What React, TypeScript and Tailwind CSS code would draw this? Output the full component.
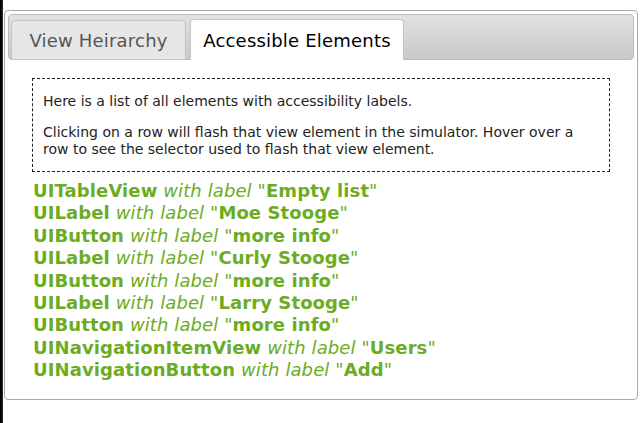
const items: [string, string][] = [
  ["UITableView", "Empty list"],
  ["UILabel", "Moe Stooge"],
  ["UIButton", "more info"],
  ["UILabel", "Curly Stooge"],
  ["UIButton", "more info"],
  ["UILabel", "Larry Stooge"],
  ["UIButton", "more info"],
  ["UINavigationItemView", "Users"],
  ["UINavigationButton", "Add"],
];

export default function App() {
  return (
    <div className="flex h-[423px] w-[642px] bg-white font-['DejaVu_Sans',Verdana,sans-serif]">
      <div className="w-[3px] shrink-0 bg-gradient-to-r from-black to-[#333]" />
      <div className="flex-1 pl-[1px] pr-[4px] pt-[10px]">
        <div className="flex h-[390px] flex-col rounded-[4px] border border-[#aaa] bg-white p-[3px]">
          {/* tab bar */}
          <div className="flex h-[46px] items-end gap-[4px] rounded-[4px] border border-[#bbb] bg-gradient-to-b from-[#e2e2e2] to-[#c9c9c9] pl-[2px]">
            <div className="mb-[-1px] flex h-[40px] w-[175px] items-center justify-center rounded-t-[4px] border border-[#c4c4c4] bg-[#e6e6e6] text-[18px] tracking-[0.2px] text-[#555]">
              View Heirarchy
            </div>
            <div className="mb-[-1px] flex h-[41px] w-[214px] items-center justify-center rounded-t-[4px] border border-b-0 border-[#c4c4c4] bg-white text-[18px] tracking-[0.2px] text-black">
              Accessible Elements
            </div>
          </div>

          <div className="px-[24px] pt-[18px]">
            <div className="border border-dashed border-[#222] px-[10px] pb-[13px] pt-[14px] text-[14px] leading-[17px] text-[#222]">
              <p>Here is a list of all elements with accessibility labels.</p>
              <p className="mt-[14px]">
                Clicking on a row will flash that view element in the simulator. Hover over a row to see
                the selector used to flash that view element.
              </p>
            </div>

            <ul className="mt-[8px] text-[18px] leading-[22.4px] tracking-[0.1px] text-[#6cac22]">
              {items.map(([cls, label], i) => (
                <li key={i} className="pl-[1px]">
                  <span className="font-bold">{cls}</span>{" "}
                  <span className="italic">with label "</span>
                  <span className="font-bold">{label}</span>
                  <span className="italic">"</span>
                </li>
              ))}
            </ul>
          </div>
        </div>
      </div>
    </div>
  );
}
